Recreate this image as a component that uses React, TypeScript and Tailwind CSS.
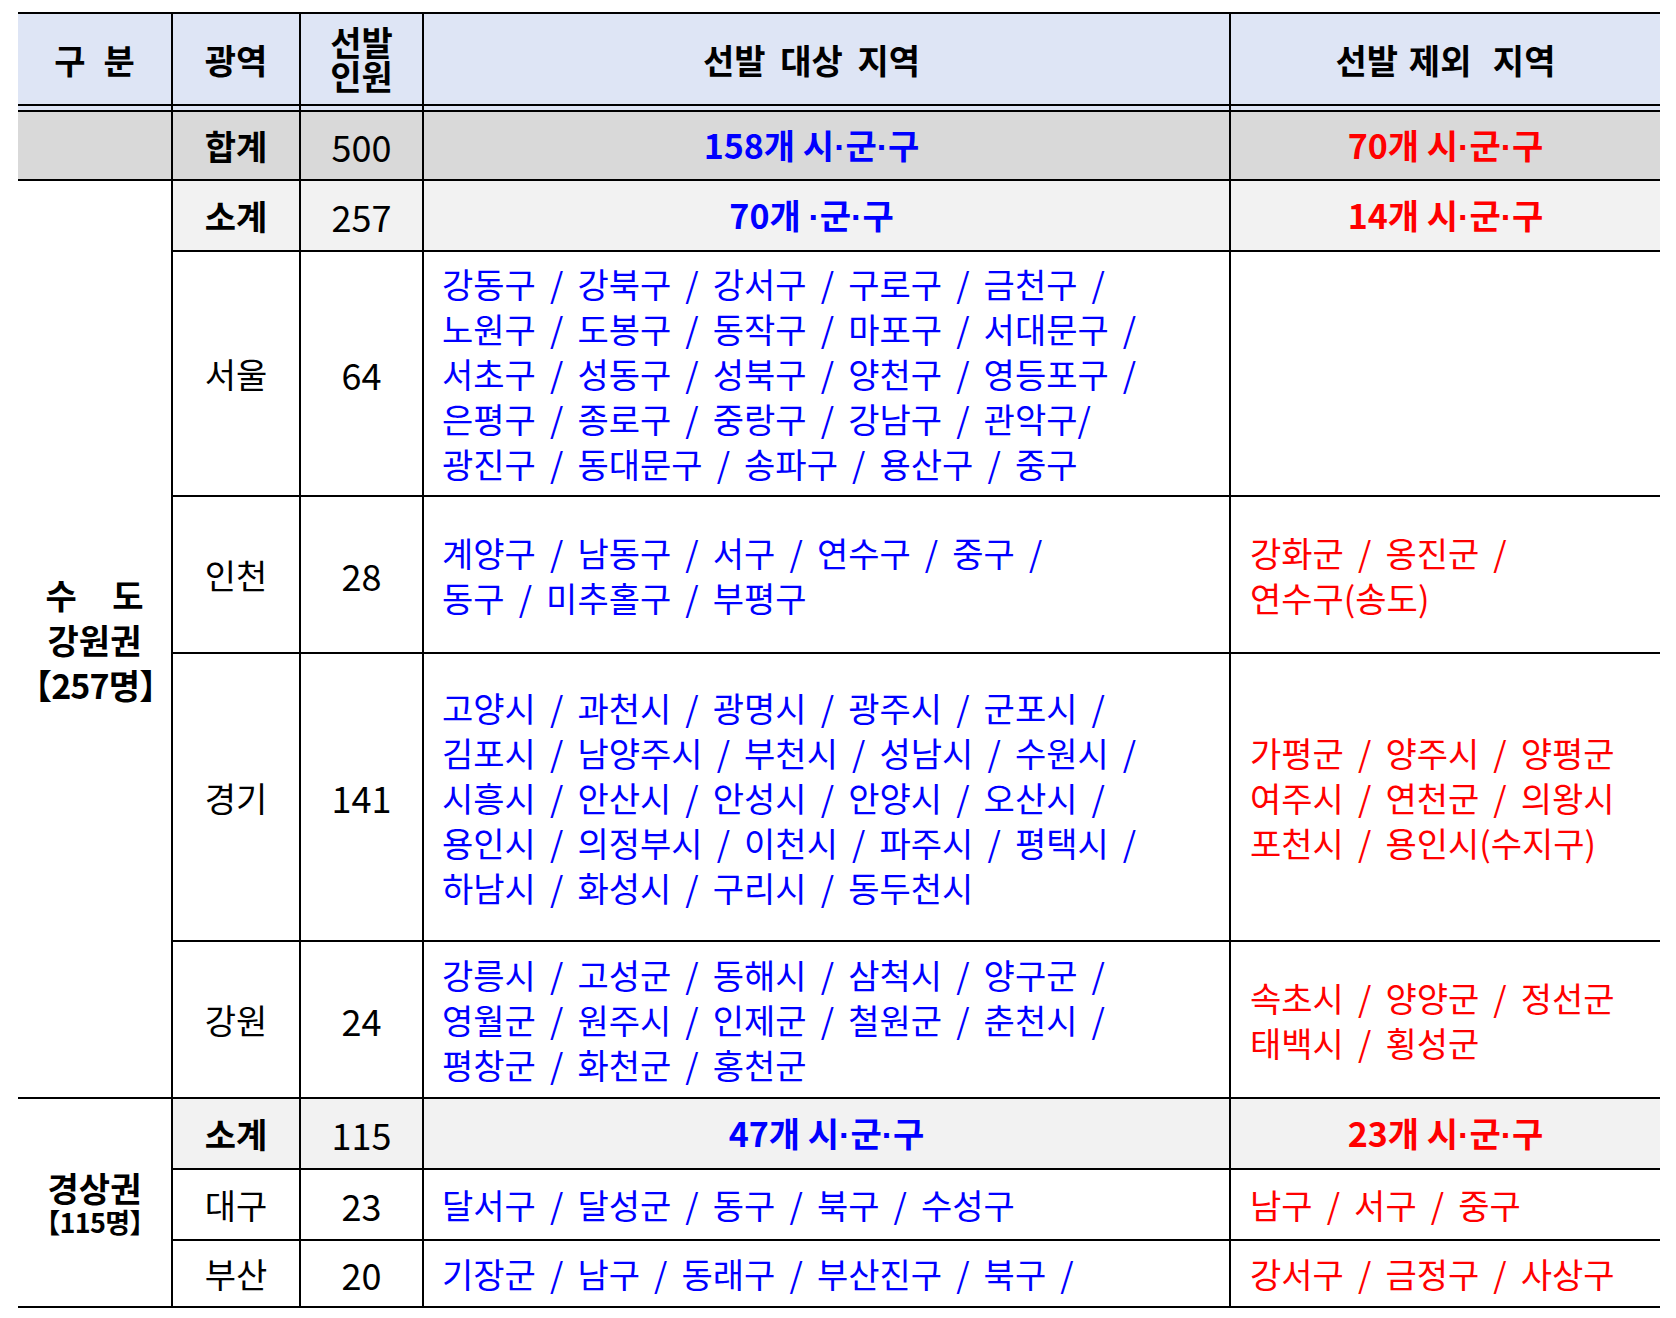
import React from 'react';

const BLUE = 'text-[#0000ff]';
const RED = 'text-[#ff0000]';

// region lists, one string per printed line
const seoulIn = [
  '강동구 / 강북구 / 강서구 / 구로구 / 금천구 /',
  '노원구 / 도봉구 / 동작구 / 마포구 / 서대문구 /',
  '서초구 / 성동구 / 성북구 / 양천구 / 영등포구 /',
  '은평구 / 종로구 / 중랑구 / 강남구 / 관악구/',
  '광진구 / 동대문구 / 송파구 / 용산구 / 중구',
];
const incheonIn = ['계양구 / 남동구 / 서구 / 연수구 / 중구 /', '동구 / 미추홀구 / 부평구'];
const incheonOut = ['강화군 / 옹진군 /', '연수구(송도)'];
const gyeonggiIn = [
  '고양시 / 과천시 / 광명시 / 광주시 / 군포시 /',
  '김포시 / 남양주시 / 부천시 / 성남시 / 수원시 /',
  '시흥시 / 안산시 / 안성시 / 안양시 / 오산시 /',
  '용인시 / 의정부시 / 이천시 / 파주시 / 평택시 /',
  '하남시 / 화성시 / 구리시 / 동두천시',
];
const gyeonggiOut = ['가평군 / 양주시 / 양평군', '여주시 / 연천군 / 의왕시', '포천시 / 용인시(수지구)'];
const gangwonIn = [
  '강릉시 / 고성군 / 동해시 / 삼척시 / 양구군 /',
  '영월군 / 원주시 / 인제군 / 철원군 / 춘천시 /',
  '평창군 / 화천군 / 홍천군',
];
const gangwonOut = ['속초시 / 양양군 / 정선군', '태백시 / 횡성군'];

function Lines({ lines, color }: { lines: string[]; color: string }) {
  return (
    <div className={`${color} leading-[45px] [word-spacing:6.5px] whitespace-pre`}>
      {lines.map(l => (
        <div key={l}>{l}</div>
      ))}
    </div>
  );
}

// narrow latin middle dot instead of the full-width CJK one
function Dot() {
  return <span className="font-['Liberation_Sans',sans-serif]">·</span>;
}

// "NN개 시·군·구"
function Count({ n, noSi }: { n: string; noSi?: boolean }) {
  return (
    <>
      {n}개 {noSi ? '' : '시'}
      <Dot />군<Dot />구
    </>
  );
}

const td = 'border-2 border-black p-0 align-middle';
const num = 'text-[36px]';

function RegionRow({
  name,
  count,
  inList,
  outList,
  h,
}: {
  name: string;
  count: string;
  inList: string[];
  outList: string[];
  h: string;
}) {
  return (
    <tr className={h}>
      <td className={`${td} text-center`}>{name}</td>
      <td className={`${td} text-center ${num}`}>{count}</td>
      <td className={`${td} pl-[18px]`}>
        <Lines lines={inList} color={BLUE} />
      </td>
      <td className={`${td} pl-[19px] border-r-0`}>
        {outList.length > 0 && <Lines lines={outList} color={RED} />}
      </td>
    </tr>
  );
}

export default function App() {
  return (
    <div className="w-[1676px] h-[1318px] bg-white pt-[12px] pl-[18px] font-['Noto_Sans_CJK_KR',sans-serif] text-[34px] text-black">
      <table className="border-collapse table-fixed w-[1642px]">
        <colgroup>
          <col className="w-[154px]" />
          <col className="w-[128px]" />
          <col className="w-[123px]" />
          <col className="w-[807px]" />
          <col className="w-[430px]" />
        </colgroup>
        <thead>
          <tr className="h-[92px] bg-[#dee5f5]">
            <th className={`${td} border-l-0 font-bold`}>
              <span>구</span>
              <span className="ml-[18px]">분</span>
            </th>
            <th className={`${td} font-bold`}>광역</th>
            <th className={`${td} font-bold leading-[34px]`}>
              선발
              <br />
              인원
            </th>
            <th className={`${td} font-bold pr-[30px] [word-spacing:7px]`}>선발 대상 지역</th>
            <th className={`${td} border-r-0 font-bold whitespace-pre [word-spacing:3px]`}>선발 제외  지역</th>
          </tr>
          <tr className="h-[6px] bg-[#dee5f5]">
            <td className={`${td} border-l-0`} />
            <td className={td} />
            <td className={td} />
            <td className={td} />
            <td className={`${td} border-r-0`} />
          </tr>
        </thead>
        <tbody>
          <tr className="h-[69px] bg-[#d9d9d9]">
            <td className={`${td} border-l-0`} />
            <td className={`${td} text-center font-bold`}>합계</td>
            <td className={`${td} text-center ${num}`}>500</td>
            <td className={`${td} text-center font-bold pr-[30px] ${BLUE}`}>
              <Count n="158" />
            </td>
            <td className={`${td} text-center font-bold border-r-0 ${RED}`}>
              <Count n="70" />
            </td>
          </tr>

          {/* 수도·강원권 */}
          <tr className="h-[71px]">
            <td rowSpan={5} className={`${td} border-l-0 text-center font-bold leading-[45px]`}>
              <div className="inline-flex flex-col items-center">
                <div className="flex justify-between w-[98px]">
                  <span>수</span>
                  <span>도</span>
                </div>
                <div>강원권</div>
                <div className="tracking-tight">【257명】</div>
              </div>
            </td>
            <td className={`${td} bg-[#f2f2f2] text-center font-bold`}>소계</td>
            <td className={`${td} bg-[#f2f2f2] text-center ${num}`}>257</td>
            <td className={`${td} bg-[#f2f2f2] text-center font-bold pr-[30px] ${BLUE}`}>
              <Count n="70" noSi />
            </td>
            <td className={`${td} bg-[#f2f2f2] text-center font-bold border-r-0 ${RED}`}>
              <Count n="14" />
            </td>
          </tr>
          <RegionRow name="서울" count="64" inList={seoulIn} outList={[]} h="h-[245px]" />
          <RegionRow name="인천" count="28" inList={incheonIn} outList={incheonOut} h="h-[157px]" />
          <RegionRow name="경기" count="141" inList={gyeonggiIn} outList={gyeonggiOut} h="h-[288px]" />
          <RegionRow name="강원" count="24" inList={gangwonIn} outList={gangwonOut} h="h-[157px]" />

          {/* 경상권 */}
          <tr className="h-[71px]">
            <td rowSpan={3} className={`${td} border-l-0 text-center font-bold`}>
              <div className="leading-[38px]">경상권</div>
              <div className="text-[27px] leading-[30px] tracking-tight">【115명】</div>
            </td>
            <td className={`${td} bg-[#f2f2f2] text-center font-bold`}>소계</td>
            <td className={`${td} bg-[#f2f2f2] text-center ${num}`}>115</td>
            <td className={`${td} bg-[#f2f2f2] text-center font-bold ${BLUE}`}>
              <Count n="47" />
            </td>
            <td className={`${td} bg-[#f2f2f2] text-center font-bold border-r-0 ${RED}`}>
              <Count n="23" />
            </td>
          </tr>
          <RegionRow
            name="대구"
            count="23"
            inList={['달서구 / 달성군 / 동구 / 북구 / 수성구']}
            outList={['남구 / 서구 / 중구']}
            h="h-[71px]"
          />
          <RegionRow
            name="부산"
            count="20"
            inList={['기장군 / 남구 / 동래구 / 부산진구 / 북구 /']}
            outList={['강서구 / 금정구 / 사상구']}
            h="h-[67px]"
          />
        </tbody>
      </table>
    </div>
  );
}
